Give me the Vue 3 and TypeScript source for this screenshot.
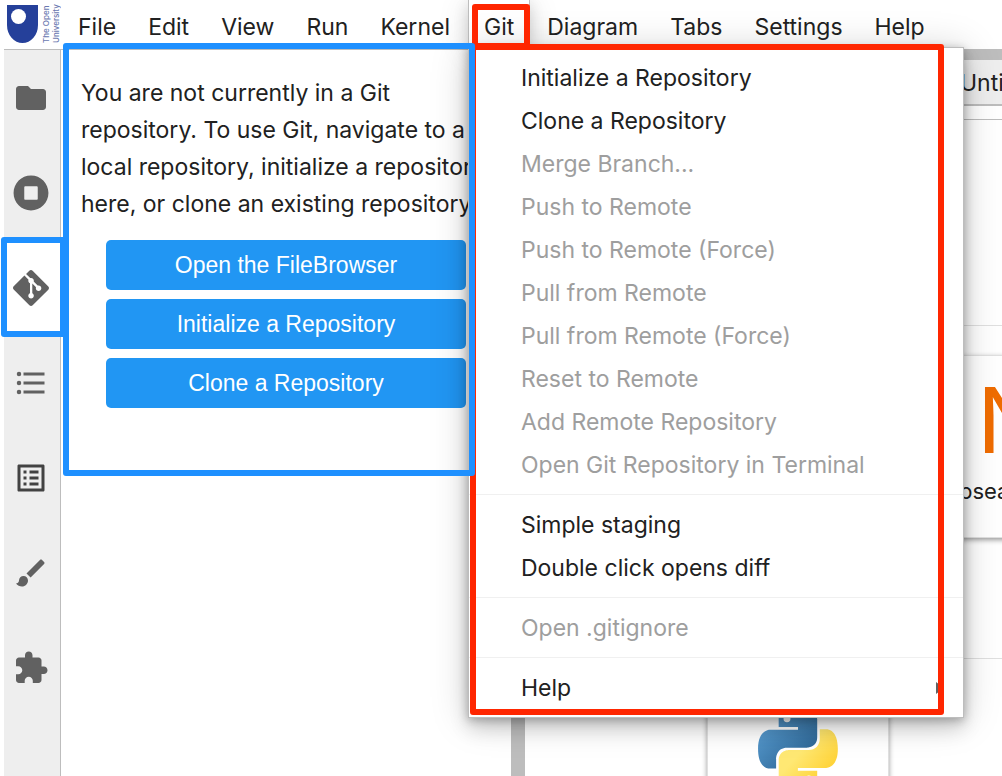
<script setup lang="ts">
interface MenuEntry {
  label: string
  disabled?: boolean
  submenu?: boolean
}

interface SideTab {
  name: string
  path: string
  box: string
  current?: boolean
  dark?: boolean
}

const menusBefore: string[] = ['File', 'Edit', 'View', 'Run', 'Kernel']
const menusAfter: string[] = ['Diagram', 'Tabs', 'Settings', 'Help']

const gitMenu: MenuEntry[][] = [
  [
    { label: 'Initialize a Repository' },
    { label: 'Clone a Repository' },
    { label: 'Merge Branch...', disabled: true },
    { label: 'Push to Remote', disabled: true },
    { label: 'Push to Remote (Force)', disabled: true },
    { label: 'Pull from Remote', disabled: true },
    { label: 'Pull from Remote (Force)', disabled: true },
    { label: 'Reset to Remote', disabled: true },
    { label: 'Add Remote Repository', disabled: true },
    { label: 'Open Git Repository in Terminal', disabled: true },
  ],
  [{ label: 'Simple staging' }, { label: 'Double click opens diff' }],
  [{ label: 'Open .gitignore', disabled: true }],
  [{ label: 'Help', submenu: true }],
]

const sideTabs: SideTab[] = [
  {
    name: 'File Browser',
    box: '0 0 24 24',
    path: 'M10 4H4c-1.1 0-1.99.9-1.99 2L2 18c0 1.1.9 2 2 2h16c1.1 0 2-.9 2-2V8c0-1.1-.9-2-2-2h-8l-2-2z',
  },
  {
    name: 'Running Terminals and Kernels',
    box: '0 0 512 512',
    path: 'M256 8C119 8 8 119 8 256s111 248 248 248 248-111 248-248S393 8 256 8zm96 328c0 8.8-7.2 16-16 16H176c-8.8 0-16-7.2-16-16V176c0-8.8 7.2-16 16-16h160c8.8 0 16 7.2 16 16v160z',
  },
  {
    name: 'Git',
    box: '0 0 24 24',
    current: true,
    path: 'M23.546 10.93L13.067.452c-.604-.603-1.582-.603-2.188 0L8.708 2.627l2.76 2.76c.645-.215 1.379-.07 1.889.441.516.515.658 1.258.438 1.9l2.658 2.66c.645-.223 1.387-.078 1.9.435.721.72.721 1.884 0 2.604-.719.719-1.881.719-2.6 0-.539-.541-.674-1.337-.404-1.996L12.86 8.955v6.525c.176.086.342.203.488.348.713.721.713 1.883 0 2.6-.719.721-1.889.721-2.609 0-.719-.719-.719-1.879 0-2.598.182-.18.387-.316.605-.406V8.835c-.217-.091-.424-.222-.6-.401-.545-.545-.676-1.342-.396-2.009L7.636 3.7.45 10.881c-.6.605-.6 1.584 0 2.189l10.48 10.477c.604.604 1.582.604 2.186 0l10.43-10.43c.605-.603.605-1.582 0-2.187',
  },
  {
    name: 'Table of Contents',
    box: '0 0 24 24',
    path: 'M7 5h14v2H7V5zm0 8v-2h14v2H7zM4 4.5a1.5 1.5 0 1 1 0 3 1.5 1.5 0 0 1 0-3zm0 6a1.5 1.5 0 1 1 0 3 1.5 1.5 0 0 1 0-3zM7 19v-2h14v2H7zm-3-2.5a1.5 1.5 0 1 1 0 3 1.5 1.5 0 0 1 0-3z',
  },
  {
    name: 'Table of Contents Outline',
    box: '0 0 24 24',
    dark: true,
    path: 'M19 5v14H5V5h14m1.1-2H3.9c-.5 0-.9.4-.9.9v16.2c0 .4.4.9.9.9h16.2c.4 0 .9-.5.9-.9V3.9c0-.5-.5-.9-.9-.9zM11 7h6v2h-6V7zm0 4h6v2h-6v-2zm0 4h6v2h-6zM7 7h2v2H7zm0 4h2v2H7zm0 4h2v2H7z',
  },
  {
    name: 'Styles',
    box: '0 0 24 24',
    path: 'M7 14c-1.66 0-3 1.34-3 3 0 1.31-1.16 2-2 2 .92 1.22 2.49 2 4 2 2.21 0 4-1.79 4-4 0-1.66-1.34-3-3-3zm13.71-9.37l-1.34-1.34c-.39-.39-1.02-.39-1.41 0L9 12.25 11.75 15l8.96-8.96c.39-.39.39-1.02 0-1.41z',
  },
  {
    name: 'Extension Manager',
    box: '0 0 24 24',
    path: 'M20.5 11H19V7c0-1.1-.9-2-2-2h-4V3.5C13 2.12 11.88 1 10.5 1S8 2.12 8 3.5V5H4c-1.1 0-1.99.9-1.99 2v3.8H3.5c1.49 0 2.7 1.21 2.7 2.7s-1.21 2.7-2.7 2.7H2V20c0 1.1.9 2 2 2h3.8v-1.5c0-1.49 1.21-2.7 2.7-2.7 1.49 0 2.7 1.21 2.7 2.7V22H17c1.1 0 2-.9 2-2v-4h1.5c1.38 0 2.5-1.12 2.5-2.5S21.88 11 20.5 11z',
  },
]

const gitActions: string[] = ['Open the FileBrowser', 'Initialize a Repository', 'Clone a Repository']
</script>

<template>
  <div class="app">
    <header class="top">
      <div class="brand">
        <svg class="shield" viewBox="0 0 32 38" aria-hidden="true">
          <path d="M1 0h31v20a15.500 18 0 0 1-31 0z" fill="#25409a" />
          <circle cx="12.500" cy="11.500" r="7.500" fill="#fff" />
        </svg>
        <span class="brand-name">The Open<br />University</span>
      </div>
      <nav class="menubar" aria-label="Main menu">
        <button v-for="m in menusBefore" :key="m" type="button" class="menu-title">{{ m }}</button>
        <div class="git-menu">
          <button type="button" class="menu-title open" aria-expanded="true">Git</button>
          <div class="dropdown" role="menu">
            <div v-for="(group, i) in gitMenu" :key="i" class="group">
              <button
                v-for="entry in group"
                :key="entry.label"
                type="button"
                role="menuitem"
                class="entry"
                :disabled="entry.disabled"
              >
                {{ entry.label }}
                <svg v-if="entry.submenu" class="arrow" viewBox="0 0 8 12" aria-hidden="true">
                  <path d="M0 0l8 6-8 6z" fill="#616161" />
                </svg>
              </button>
            </div>
            <div class="mark mark-menu"></div>
          </div>
          <div class="mark mark-title"></div>
        </div>
        <button v-for="m in menusAfter" :key="m" type="button" class="menu-title">{{ m }}</button>
      </nav>
    </header>

    <div class="workspace">
      <aside class="sidebar">
        <button
          v-for="tab in sideTabs"
          :key="tab.name"
          type="button"
          class="side-tab"
          :class="{ current: tab.current, dark: tab.dark }"
          :aria-label="tab.name"
        >
          <svg :viewBox="tab.box" aria-hidden="true"><path :d="tab.path" /></svg>
          <span v-if="tab.current" class="mark mark-tab"></span>
        </button>
      </aside>

      <section class="git-panel">
        <p class="notice">
          You are not currently in a Git<br />
          repository. To use Git, navigate to a<br />
          local repository, initialize a repository<br />
          here, or clone an existing repository.
        </p>
        <div class="actions">
          <button v-for="a in gitActions" :key="a" type="button" class="action">{{ a }}</button>
        </div>
      </section>

      <main class="dock">
        <div class="tabbar"><div class="doc-tab">Untitled</div></div>
        <div class="toolbar"></div>
        <div class="launcher">
          <div class="section-head"></div>
          <div class="cards">
            <div class="card second">
              <span class="nb">N</span>
              <span class="card-label">nbsearch</span>
            </div>
          </div>
          <div class="section-head next"></div>
          <div class="cards">
            <div class="card">
              <svg class="python" viewBox="0 0 256 255" aria-hidden="true">
                <defs>
                  <linearGradient id="py-blue" x1="12.959%" x2="79.639%" y1="12.039%" y2="78.201%">
                    <stop offset="0%" stop-color="#5a9fd4" />
                    <stop offset="100%" stop-color="#306998" />
                  </linearGradient>
                  <linearGradient id="py-yellow" x1="35%" x2="75%" y1="40%" y2="75%">
                    <stop offset="0%" stop-color="#ffe873" />
                    <stop offset="100%" stop-color="#ffd43b" />
                  </linearGradient>
                </defs>
                <path
                  fill="url(#py-blue)"
                  d="M126.916.072c-64.832 0-60.784 28.115-60.784 28.115l.072 29.128h61.868v8.745H41.631S.145 61.355.145 126.77c0 65.417 36.21 63.097 36.21 63.097h21.61v-30.356s-1.165-36.21 35.632-36.21h61.362s34.475.557 34.475-33.319V33.97S194.67.072 126.916.072zM92.802 19.66a11.12 11.12 0 0 1 11.13 11.13 11.12 11.12 0 0 1-11.13 11.13 11.12 11.12 0 0 1-11.13-11.13 11.12 11.12 0 0 1 11.13-11.13z"
                />
                <path
                  fill="url(#py-yellow)"
                  d="M128.757 254.126c64.832 0 60.784-28.115 60.784-28.115l-.072-29.127H127.6v-8.745h86.441s41.486 4.705 41.486-60.712c0-65.416-36.21-63.096-36.21-63.096h-21.61v30.355s1.165 36.21-35.632 36.21h-61.362s-34.475-.557-34.475 33.32v56.013s-5.235 33.897 62.518 33.897zm34.114-19.586a11.12 11.12 0 0 1-11.13-11.13 11.12 11.12 0 0 1 11.13-11.131 11.12 11.12 0 0 1 11.13 11.13 11.12 11.12 0 0 1-11.13 11.13z"
                />
              </svg>
            </div>
          </div>
        </div>
      </main>
      <div class="mark mark-panel"></div>
    </div>
  </div>
</template>

<style>
body {
  margin: 0;
}
</style>

<style scoped>
.app {
  display: flex;
  flex-direction: column;
  height: 100vh;
  overflow: hidden;
  background: #fff;
  color: #212121;
  font-family: Inter, 'Liberation Sans', sans-serif;
  font-size: 23px;
}

.app * {
  box-sizing: border-box;
}

button {
  margin: 0;
  padding: 0;
  border: 0;
  background: none;
  color: inherit;
  font: inherit;
}

.top {
  position: relative;
  z-index: 1;
  display: flex;
  flex: none;
  height: 50px;
  margin-left: 4px;
  border-bottom: 1px solid #bdbdbd;
  background: #fff;
}

.brand {
  display: flex;
  flex: none;
  width: 58px;
  padding: 5px 0 0 2px;
  gap: 3px;
}

.shield {
  flex: none;
  width: 32px;
  height: 38px;
}

.brand-name {
  height: 38px;
  color: #6b78b0;
  font-size: 8px;
  font-weight: 500;
  line-height: 10px;
  white-space: nowrap;
  writing-mode: vertical-rl;
  transform: rotate(180deg);
}

.menubar {
  display: flex;
  flex: none;
}

.menu-title {
  height: 49px;
  padding: 0 16px;
  line-height: 55px;
  white-space: nowrap;
}

.git-menu {
  position: relative;
  z-index: 2;
  margin: 0 1px 0 2px;
}

.menu-title.open {
  border: solid #bdbdbd;
  border-width: 0 1px;
  padding: 0 15px;
  background: #fff;
  box-shadow: 0 2px 32px rgba(0, 0, 0, 0.12), 0 5px 14px rgba(0, 0, 0, 0.14);
}

.dropdown {
  position: absolute;
  top: 47px;
  left: 0;
  width: 496px;
  padding: 8px 0;
  border: 1px solid #bdbdbd;
  background: #fff;
  box-shadow: 0 2px 9px rgba(0, 0, 0, 0.26), 0 11px 18px rgba(0, 0, 0, 0.14),
    0 2px 36px rgba(0, 0, 0, 0.18);
}

.group + .group {
  margin-top: 8px;
  padding-top: 8px;
  border-top: 1px solid #f0f0f0;
}

.entry {
  display: flex;
  align-items: center;
  justify-content: space-between;
  width: 100%;
  height: 43px;
  padding: 0 19px 0 52px;
  text-align: left;
}

.entry:disabled {
  color: #9e9e9e;
}

.arrow {
  width: 8px;
  height: 12px;
}

/* Annotation frames laid over the interface */
.mark {
  position: absolute;
  border: 6px solid #ff2600;
  border-radius: 3px;
  pointer-events: none;
}

.mark-menu {
  top: -4px;
  right: 19px;
  bottom: 2px;
  left: 1px;
}

.mark-title {
  top: 4px;
  right: 0;
  bottom: 0;
  left: 4px;
}

.mark-tab,
.mark-panel {
  border-color: #1e90ff;
}

.mark-tab {
  top: -3px;
  right: -6px;
  bottom: -2px;
  left: -3px;
}

.mark-panel {
  z-index: 3;
  top: -7px;
  left: 63px;
  width: 412px;
  height: 433px;
}

.workspace {
  position: relative;
  display: flex;
  flex: 1;
  min-height: 0;
}

.sidebar {
  flex: none;
  width: 57px;
  margin-left: 4px;
  border-right: 1px solid #bdbdbd;
  background: #eee;
}

.side-tab {
  position: relative;
  display: flex;
  align-items: center;
  justify-content: center;
  width: 100%;
  height: 95px;
  padding-right: 2px;
}

.side-tab.current {
  background: #fff;
}

.side-tab svg {
  width: 36px;
  height: 36px;
  fill: #616161;
}

.side-tab.dark svg {
  fill: #424242;
}

.git-panel {
  flex: none;
  width: 450px;
  padding: 25px 20px;
}

.notice {
  margin: 0;
  line-height: 37px;
  white-space: nowrap;
}

.actions {
  display: flex;
  flex-direction: column;
  gap: 9px;
  margin: 17px 25px 0;
}

.action {
  height: 50px;
  border-radius: 5px;
  background: #2196f3;
  color: #fff;
  font-family: 'Liberation Sans', Arial, sans-serif;
  font-size: 23px;
  line-height: 48px;
}

.dock {
  flex: 1;
  min-width: 0;
  border-left: 14px solid #bdbdbd;
}

.tabbar {
  height: 56px;
  padding-left: 413px;
  border: solid #bdbdbd;
  border-width: 10px 0 2px;
  background: #eee;
}

.doc-tab {
  padding-left: 22px;
  line-height: 46px;
  white-space: nowrap;
}

.toolbar {
  height: 14px;
  border-bottom: 1px solid #bdbdbd;
}

.section-head {
  height: 206px;
  margin-bottom: 29px;
  border-bottom: 1px solid #e0e0e0;
}

.section-head.next {
  height: 121px;
}

.cards {
  display: flex;
  padding-left: 182px;
}

.card {
  display: flex;
  flex: none;
  flex-direction: column;
  align-items: center;
  width: 182px;
  height: 183px;
  padding-top: 20px;
  border: 1px solid #e0e0e0;
  box-shadow: 0 2px 5px rgba(0, 0, 0, 0.4);
}

.card.second {
  align-items: flex-start;
  margin-left: 200px;
  padding-left: 38px;
}

.nb {
  margin: 0 0 7px 31px;
  color: #ef6c00;
  font-size: 91px;
  line-height: 88px;
}

.card-label {
  font-size: 22px;
  line-height: 40px;
}

.python {
  width: 80px;
  height: 80px;
}
</style>
